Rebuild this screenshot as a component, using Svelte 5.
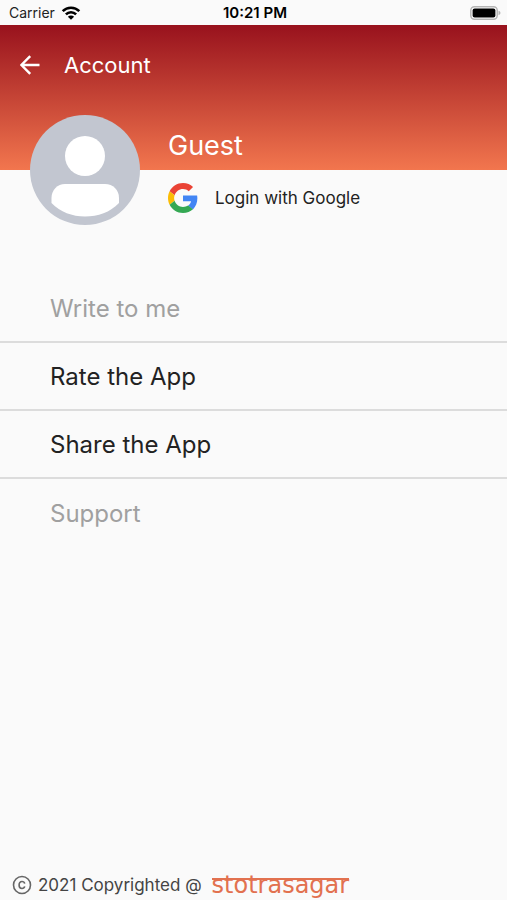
<script>
  let { userName = 'Guest', time = '10:21 PM' } = $props();

  const items = [
    { label: 'Write to me', enabled: false },
    { label: 'Rate the App', enabled: true },
    { label: 'Share the App', enabled: true },
    { label: 'Support', enabled: false }
  ];
</script>

<div class="screen">
  <div class="status-bar">
    <div class="carrier">
      <span>Carrier</span>
      <svg width="20" height="14" viewBox="0 0 20 14" aria-hidden="true">
        <g fill="none" stroke="#000" stroke-width="2.6">
          <path d="M1.7 5.2a11.8 11.8 0 0 1 16.6 0" />
          <path d="M4.9 8.4a7.2 7.2 0 0 1 10.2 0" />
        </g>
        <path d="M10 13.8 6.9 10.7a4.4 4.4 0 0 1 6.2 0z" />
      </svg>
    </div>
    <span class="time">{time}</span>
    <svg class="battery" width="31" height="14" viewBox="0 0 31 14" aria-hidden="true">
      <rect x="0.8" y="0.8" width="26.4" height="12.4" rx="3.6" fill="#fff" stroke="#b5b5b5" stroke-width="1.5" />
      <rect x="2.6" y="2.6" width="22.8" height="8.8" rx="2" />
      <path d="M28.5 4.8q2 .6 2 2.2t-2 2.2z" fill="#b5b5b5" />
    </svg>
  </div>

  <header class="hero">
    <div class="toolbar">
      <button class="back" aria-label="Back">
        <svg width="20" height="20" viewBox="0 0 20 20" aria-hidden="true">
          <path d="M19.5 10H1.8M10.2 1.2 1.4 10l8.8 8.8" fill="none" stroke="#fff" stroke-width="2.4" />
        </svg>
      </button>
      <h1>Account</h1>
    </div>

    <div class="profile">
      <svg class="avatar" width="110" height="110" viewBox="0 0 110 110" role="img" aria-label="Profile picture">
        <circle cx="55" cy="55" r="55" fill="#c2c6d0" />
        <circle cx="55" cy="41" r="20" fill="#fff" />
        <path d="M35 69h40c8 0 14 6 14 14v5c-9 9.500-21 13.500-34 13.500S30.500 97 21.500 88v-5c0-8 6-14 13.500-14z" fill="#fff" />
      </svg>
      <div class="info">
        <h2>{userName}</h2>
        <button class="login">
          <svg width="30" height="30" viewBox="0 0 48 48" aria-hidden="true">
            <path fill="#ea4335" d="M24 9.500c3.540 0 6.710 1.220 9.210 3.600l6.850-6.850C35.900 2.380 30.470 0 24 0 14.620 0 6.510 5.380 2.560 13.220l7.980 6.190C12.430 13.720 17.740 9.500 24 9.500z" />
            <path fill="#4285f4" d="M46.980 24.550c0-1.570-.15-3.090-.38-4.550H24v9.020h12.940c-.58 2.960-2.260 5.480-4.780 7.180l7.730 6c4.510-4.180 7.090-10.360 7.090-17.650z" />
            <path fill="#fbbc05" d="M10.530 28.590c-.48-1.450-.76-2.990-.76-4.590s.27-3.140.76-4.590l-7.980-6.190C.92 16.460 0 20.120 0 24s.92 7.540 2.560 10.780z" />
            <path fill="#34a853" d="M24 48c6.480 0 11.930-2.130 15.890-5.810l-7.730-6c-2.150 1.450-4.920 2.300-8.160 2.300-6.260 0-11.570-4.220-13.470-9.910l-7.980 6.190C6.510 42.620 14.620 48 24 48z" />
          </svg>
          <span>Login with Google</span>
        </button>
      </div>
    </div>
  </header>

  <nav class="menu">
    {#each items as item}
      <button class="menu-item" disabled={!item.enabled}>{item.label}</button>
    {/each}
  </nav>

  <footer>
    <svg width="20" height="20" viewBox="0 0 20 20" fill="none" stroke="#666" stroke-width="1.600" aria-hidden="true">
      <circle cx="10" cy="10" r="8.500" />
      <path d="M12.700 8.600C12.400 7.300 11.400 6.500 10 6.500c-1.800 0-2.900 1.300-2.900 3.500s1.100 3.500 2.900 3.500c1.400 0 2.400-.8 2.700-2.100" />
    </svg>
    <span>2021 Copyrighted @</span>
    <a class="brand" href="#stotrasagar">stotrasagar</a>
  </footer>
</div>

<style>
  :global(body) {
    margin: 0;
    background: #fafafa;
  }

  .screen {
    display: flex;
    flex-direction: column;
    min-height: 100vh;
    color: #222;
    font-family: Inter, "Liberation Sans", sans-serif;
  }

  button {
    padding: 0;
    border: none;
    background: none;
    color: inherit;
    font: inherit;
    cursor: pointer;
  }

  .status-bar {
    display: grid;
    grid-template-columns: 1fr auto 1fr;
    align-items: center;
    height: 25px;
    padding: 0 6px 0 9px;
    font-size: 14px;
  }
  .carrier {
    display: flex;
    align-items: center;
    gap: 6px;
  }
  .time {
    color: #000;
    font-size: 15px;
    font-weight: 600;
  }
  .battery { justify-self: end; }

  /* the gradient stops halfway down the avatar */
  .hero {
    background: linear-gradient(#98121d, #f2764e) no-repeat 0 0 / 100% 145px;
  }
  .toolbar {
    display: flex;
    align-items: center;
    gap: 24px;
    height: 80px;
    padding: 0 20px;
    color: #fff;
  }
  .back {
    display: flex;
    padding: 0;
  }
  h1, h2 {
    margin: 0;
    font-weight: 400;
  }
  h1 { font-size: 22px; }

  .profile {
    display: flex;
    gap: 28px;
    padding: 10px 30px 0;
  }
  .avatar { flex: none; }
  .info {
    display: grid;
    grid-template-rows: 55px 55px;
    align-items: center;
    justify-items: start;
  }
  h2 {
    padding-top: 6px;
    color: #fff;
    font-size: 27px;
  }
  .login {
    display: flex;
    align-items: center;
    gap: 17px;
    font-size: 17px;
  }

  .menu {
    display: flex;
    flex-direction: column;
    padding-top: 50px;
  }
  .menu-item {
    height: 68px;
    padding: 0 50px;
    border-bottom: 2px solid #dcdcdc;
    font-size: 24px;
    text-align: left;
  }
  .menu-item:last-child { border-bottom: none; }
  .menu-item:disabled {
    color: #a0a0a0;
    cursor: default;
  }

  footer {
    display: flex;
    align-items: center;
    gap: 6px;
    height: 30px;
    margin-top: auto;
    padding: 0 12px;
    color: #444;
    font-size: 17px;
  }
  /* headline bar runs through the tall letters, as in Devanagari */
  .brand {
    margin-left: 4px;
    background: linear-gradient(#e2714f, #e2714f) no-repeat 0 7px / 100% 2px;
    color: #e2714f;
    font-family: "DejaVu Sans", sans-serif;
    font-size: 24px;
    line-height: 28px;
    text-decoration: none;
  }
</style>
